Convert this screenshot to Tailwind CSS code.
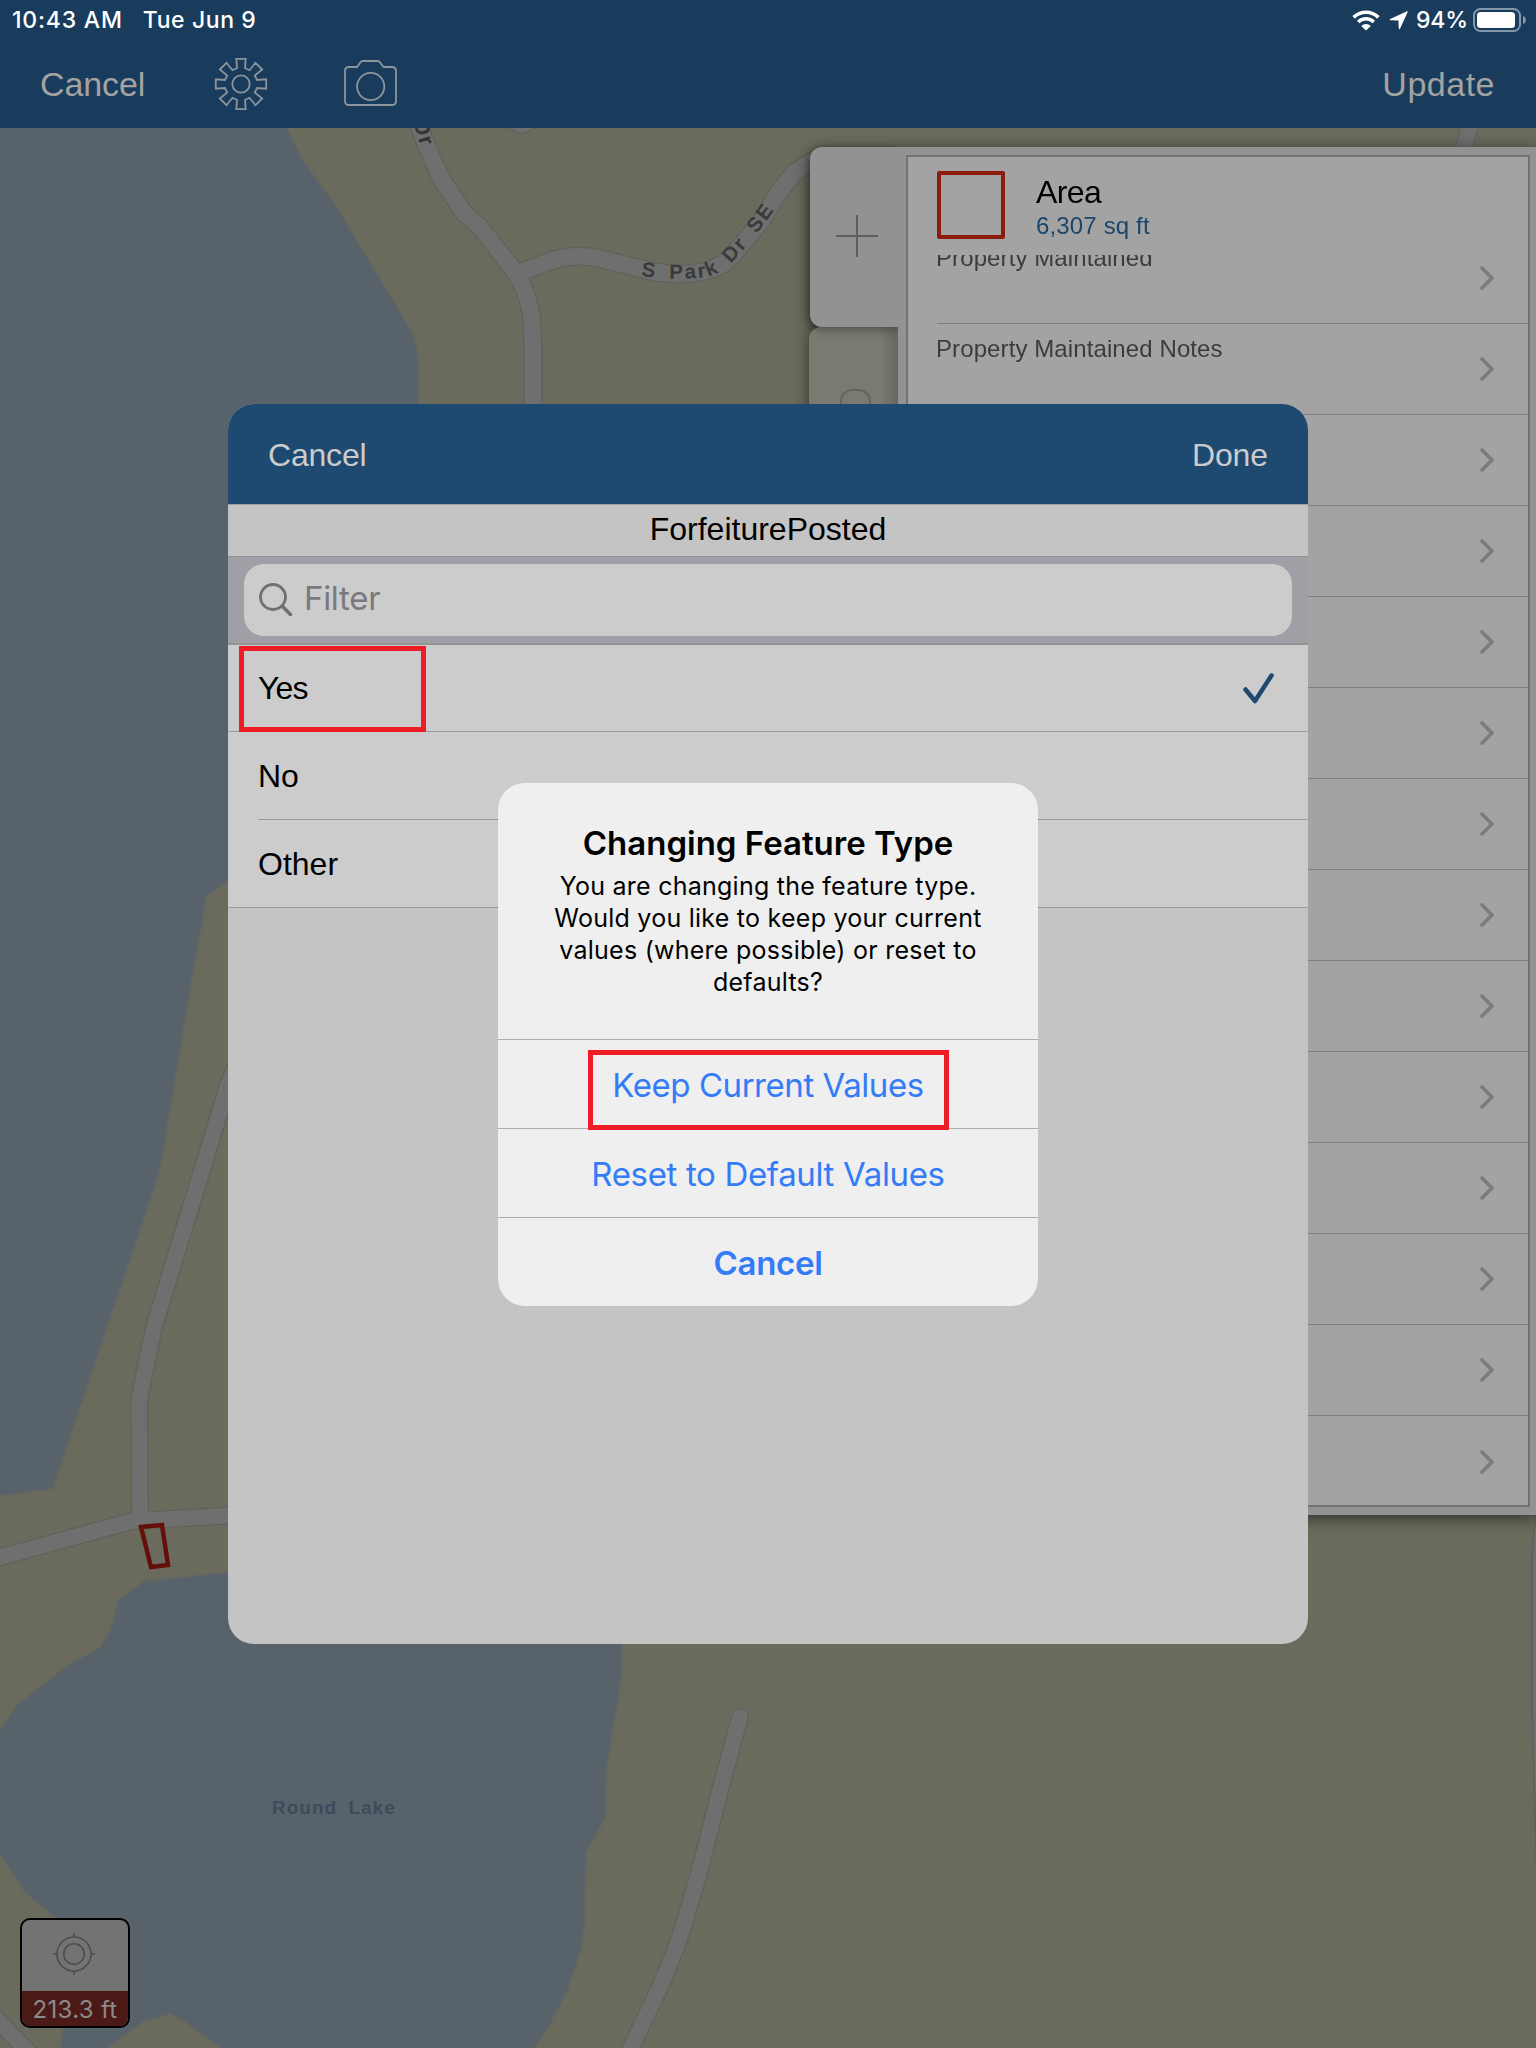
<!DOCTYPE html>
<html lang="en">
<head>
<meta charset="utf-8">
<title>Feature editor</title>
<script src="https://cdn.jsdelivr.net/npm/@tailwindcss/browser@4"></script>
</head>
<body class="bg-[#6a6b5c]">
<div class="relative w-[1536px] h-[2048px] overflow-hidden bg-[#6a6b5c] font-['Liberation_Sans',Arial,sans-serif] flex flex-col">

  <!-- base map -->
  <svg class="absolute inset-0" width="1536" height="2048" viewBox="0 0 1536 2048" fill="none">
    <g fill="#58626b" stroke="#656860" stroke-width="2">
      <path d="M-5 120H283L303 160L337 207L364 252L389 293L412 332Q418 346 418 360V700L228 881L207 896L192 981L163 1155L158 1177L53 1489L-5 1497Z"/>
      <path d="M228 1572L143 1581L118 1600L110 1630L99 1648L67 1665L17 1705L0 1730L-5 1740V1850L0 1855L25 1893L55 1917L70 1960L63 2027L59 2055H98L143 2022L170 2014L185 2022L230 2055H530L549 2027L568 1990L581 1950L585 1927L586 1853L606 1817L607 1767L622 1677L623 1600L400 1560Z"/>
    </g>
    <g stroke-linejoin="round" stroke-linecap="round">
      <g stroke="#61615b">
        <path stroke-width="19" d="M416 118L427 147L442 180L464 213L480 227L516 273Q528 292 532 320L533 353V420M516 274L553 260Q578 253 601 259L655 272Q680 276 701 272Q722 268 732 256L762 220L778 193L794 173L812 161"/>
        <path stroke-width="18" d="M255 1025L228 1085L154 1327L139 1400L140 1518"/>
        <path stroke-width="18" d="M-10 1560L132 1521L240 1515M740 1717L722 1783L698 1877L678 1943L660 1987L625 2060M-10 2012L35 2059M505 118L522 125L536 118M1472 118L1462 155"/>
      </g>
      <g stroke="#6f6f6f">
        <path stroke-width="16.500" d="M416 118L427 147L442 180L464 213L480 227L516 273Q528 292 532 320L533 353V420M516 274L553 260Q578 253 601 259L655 272Q680 276 701 272Q722 268 732 256L762 220L778 193L794 173L812 161"/>
        <path stroke-width="15.500" d="M255 1025L228 1085L154 1327L139 1400L140 1518"/>
        <path stroke-width="15.500" d="M-10 1560L132 1521L240 1515M740 1717L722 1783L698 1877L678 1943L660 1987L625 2060M-10 2012L35 2059M505 118L522 125L536 118M1472 118L1462 155"/>
      </g>
      <path d="M1538 1480L1532 1560L1532 1700L1538 1920Z" fill="#6f6f6f" stroke="#5f5f5b" stroke-width="1.5"/>
      <path d="M141 1527L162 1525L168 1565L151 1567Z" stroke="#650f0a" stroke-width="4.500" stroke-linejoin="miter"/>
    </g>
    <path id="park" d="M641 276Q675 281 706 277Q724 273 736 258Q758 234 781 200"/>
    <text font-size="20.500" font-weight="700" fill="#3a3a3a" letter-spacing="2" word-spacing="5"><textPath href="#park">S Park Dr SE</textPath></text>
    <text transform="translate(413 122) rotate(73)" font-size="22" font-weight="700" fill="#353535" letter-spacing="1">Dr</text>
    <text x="272" y="1814" font-size="19" font-weight="700" fill="#3f4a5a" letter-spacing="1" word-spacing="5">Round Lake</text>
  </svg>

  <!-- top bar -->
  <header class="relative h-32 bg-[#193b5c] flex flex-col">
    <div class="h-10 flex items-center justify-between pl-3 pr-[9px] text-white font-['Inter',sans-serif] font-medium text-[23px]">
      <div class="flex gap-[20px]"><span class="tracking-[0.8px]">10:43 AM</span><span class="tracking-[0.6px]">Tue Jun 9</span></div>
      <div class="flex items-center">
        <svg width="28" height="21" viewBox="0 0 28 21" fill="none" stroke="#fff" stroke-width="3.6"><path d="M1.6 7.4A17.6 17.6 0 0 1 26.4 7.4M6.2 12A11 11 0 0 1 21.8 12"/><path d="M14 20.6L9.2 15.9A6.9 6.9 0 0 1 18.8 15.9Z" fill="#fff" stroke="none"/></svg>
        <svg class="ml-[9px] mr-2" width="19" height="19" viewBox="0 0 19 19" fill="#fff"><path d="M18 .3Q19 0 18.6 1.2L11 17.8Q10.200 19 9.800 17.600L9.400 9.600L1.300 9.200Q0 8.800 1.200 8Z"/></svg>
        <span class="tracking-[-0.1px]">94%</span>
        <svg class="ml-[5px]" width="54" height="24" viewBox="0 0 54 24"><rect x="1" y="1" width="46" height="22" rx="6.500" fill="none" stroke="#8497a8" stroke-width="2"/><rect x="4" y="4" width="38" height="16" rx="3.500" fill="#fff"/><path d="M50 8Q53 9 53 12T50 16Z" fill="#8497a8"/></svg>
      </div>
    </div>
    <div class="h-[88px] flex items-center pl-10 pr-[41px] text-[#a3a3a3] text-[34px]">
      <span class="w-[174px] tracking-[-0.1px]">Cancel</span>
      <svg width="54" height="54" viewBox="-27 -27 54 54" fill="none" stroke="#8c959c" stroke-width="1.800"><path d="M-4.700-25.200H4.700L4-16L8.500-13.800L14.500-21.200L21.200-14.500L13.800-8.500L16-4L25.200-4.700V4.700L16 4L13.800 8.500L21.200 14.500L14.500 21.200L8.500 13.800L4 16L4.700 25.200H-4.700L-4 16L-8.500 13.800L-14.500 21.200L-21.200 14.500L-13.800 8.500L-16 4L-25.200 4.700V-4.700L-16-4L-13.800-8.500L-21.200-14.500L-14.500-21.200L-8.500-13.800L-4-16Z"/><circle r="8.700"/></svg>
      <svg class="ml-[76px] -mt-0.5" width="54" height="46" viewBox="0 0 54 46" fill="none" stroke="#8c959c" stroke-width="1.800"><path d="M5 7H13L16.500 2.300Q17.300 1 19 1H33.500Q35.200 1 36 2.300L39.500 7H48Q52 7 52 11V41Q52 45 48 45H5Q1 45 1 41V11Q1 7 5 7Z"/><circle cx="26.700" cy="26.500" r="13.600"/></svg>
      <span class="ml-auto tracking-[0.5px]">Update</span>
    </div>
  </header>

  <!-- feature details panel -->
  <aside class="absolute left-[809px] top-[147px] w-[727px] h-[1368px] flex drop-shadow-[0_3px_8px_rgba(0,0,0,0.55)]">
    <div class="w-[89px] flex flex-col shrink-0">
      <div class="relative z-10 ml-px h-[180px] bg-[#929292] rounded-l-[12px] flex items-center justify-center shadow-[0_3px_10px_rgba(0,0,0,0.35)] [clip-path:inset(-20px_0_-20px_-20px)]">
        <svg class="mr-[-6px] -mt-0.5" width="44" height="44" viewBox="0 0 44 44" stroke="#5f5f5f" stroke-width="2"><path d="M1 22H43M22 1V43"/></svg>
      </div>
      <div class="h-[140px] rounded-l-[12px] bg-linear-to-r from-[#7b7a70] from-80% to-[#68675f] flex justify-center">
        <svg class="mt-[62px] ml-[3px]" width="34" height="60" viewBox="0 0 34 60" fill="none" stroke="#66655d" stroke-width="2"><rect x="3" y="1" width="29" height="50" rx="11"/></svg>
      </div>
    </div>
    <div class="flex-1 bg-[#929292] pt-2 pl-2 pr-[6px] pb-2">
      <div class="h-full border-2 border-[#717171] bg-[#a3a3a3] flex flex-col overflow-hidden">
        <div class="h-[98px] shrink-0 flex pl-[29px] pt-[14px]">
          <div class="w-[68px] h-[68px] border-4 border-[#8d1b10] rounded-[2px]"></div>
          <div class="ml-[31px] pt-[3px]">
            <div class="text-[32px] leading-9 text-black tracking-[-0.6px]">Area</div>
            <div class="text-[24px] leading-8 text-[#1c456a] tracking-[0.15px]">6,307 sq ft</div>
          </div>
        </div>
        <div class="flex-1 overflow-hidden pl-[29px]" id="rows"></div>
      </div>
    </div>
  </aside>

  <!-- value picker -->
  <section class="absolute left-[228px] top-[404px] w-[1080px] h-[1240px] rounded-[26px] overflow-hidden bg-[#c4c4c4] text-[32px] text-black flex flex-col">
    <div class="h-[100px] bg-[#1e4a71] text-[#cccccc] flex items-center justify-between px-10 pt-0.5"><span class="tracking-[-0.2px]">Cancel</span><span class="tracking-[-0.1px]">Done</span></div>
    <div class="h-[53px] border-t border-b border-t-[#99a1a8] border-b-[#929292] text-center leading-[48px]">ForfeiturePosted</div>
    <div class="h-[88px] bg-[#a09fa5] border-b-2 border-[#949496] px-4 pt-[7px]">
      <div class="h-[72px] rounded-[20px] bg-[#cccccc] flex items-center pl-[15px] text-[#7a7a7c] font-['Inter',sans-serif] text-[33px]">
        <svg width="34" height="34" viewBox="0 0 34 34" fill="none" stroke="#707072" stroke-linecap="round"><circle cx="14" cy="14" r="12.500" stroke-width="2.800"/><path d="M23.300 23.300L31.500 31.500" stroke-width="3.500"/></svg>
        <span class="ml-[11px] -mt-0.5 tracking-[-0.3px]">Filter</span>
      </div>
    </div>
    <div class="bg-[#cccccc] border-b border-[#999]">
      <div class="h-[87px] pl-[30px] pr-[34px] border-b border-[#999] flex items-center justify-between"><span class="tracking-[-0.8px]">Yes</span>
        <svg width="31" height="31" viewBox="0 0 31 31" fill="none" stroke="#1e4a71" stroke-width="4.500" stroke-linecap="round" stroke-linejoin="round"><path d="M2.500 16.500L12 28L28.500 2.500"/></svg></div>
      <div class="ml-[30px] h-[88px] border-b border-[#999] flex items-center"><span>No</span></div>
      <div class="ml-[30px] h-[87px] flex items-center"><span>Other</span></div>
    </div>
  </section>

  <!-- highlight round the chosen value -->
  <div class="absolute left-[239px] top-[646px] w-[187px] h-[86px] border-[5px] border-[#ee1c25]"></div>

  <!-- alert -->
  <section class="absolute left-[498px] top-[783px] w-[540px] h-[523px] rounded-[27px] overflow-hidden bg-[#efefef] font-['Inter',sans-serif] text-center flex flex-col">
    <div class="h-[257px] shrink-0 border-b border-[#adadad] pt-10">
      <h1 class="text-[33px] leading-[41px] font-semibold text-black">Changing Feature Type</h1>
      <p class="mt-[6px] text-[25px] leading-8 text-black whitespace-nowrap tracking-[0.25px]">You are changing the feature type.<br>Would you like to keep your current<br>values (where possible) or reset to<br>defaults?</p>
    </div>
    <div class="h-[89px] shrink-0 border-b border-[#adadad] text-[#347cf7] text-[33px] leading-[91px] tracking-[-0.45px]">Keep Current Values</div>
    <div class="h-[89px] shrink-0 border-b border-[#adadad] text-[#347cf7] text-[33px] leading-[91px] tracking-[-0.35px]">Reset to Default Values</div>
    <div class="h-[88px] shrink-0 text-[#347cf7] text-[33px] leading-[91px] font-semibold tracking-[-0.3px]">Cancel</div>
  </section>
  <div class="absolute left-[588px] top-[1050px] w-[361px] h-[80px] border-[5px] border-[#ee1c25]"></div>

  <!-- GPS accuracy -->
  <div class="absolute left-5 top-[1918px] w-[110px] h-[110px] rounded-[10px] border-2 border-black bg-[#737373] overflow-hidden flex flex-col">
    <div class="flex-1 flex justify-center pt-[13px]"><svg class="mr-0.5" width="42" height="42" viewBox="0 0 42 42" fill="none" stroke="#4c4c4c" stroke-width="1.600"><circle cx="21" cy="21" r="17"/><circle cx="21" cy="21" r="10.300"/><path d="M21 0V4M21 38V42M0 21H4M38 21H42"/></svg></div>
    <div class="h-[35px] bg-[#4b1a17] text-[#8a8a8a] font-['Inter',sans-serif] text-[24px] leading-[37px] tracking-[0.3px] text-center">213.3 ft</div>
  </div>
</div>
<script>
  const labels = ['Property Maintained', 'Property Maintained Notes', '', '', '', '', '', '', '', '', '', '', '', ''];
  document.getElementById('rows').innerHTML = labels.map((t, i) => `
    <div class="h-[91px] flex justify-between pr-[33px] ${i === 0 ? '-mt-[22px]' : ''} ${i === 13 ? '' : 'border-b border-[#808080]'}">
      <span class="-ml-px text-[24px] leading-[50px] text-[#3c3c3c] tracking-[0.1px]">${t}</span>
      <svg class="self-center" width="16" height="26" viewBox="0 0 16 26" fill="none" stroke="#7c7c7e" stroke-width="3.800" stroke-linecap="round" stroke-linejoin="round"><path d="M3 3L13 13L3 23"/></svg>
    </div>`).join('');
</script>
</body>
</html>
